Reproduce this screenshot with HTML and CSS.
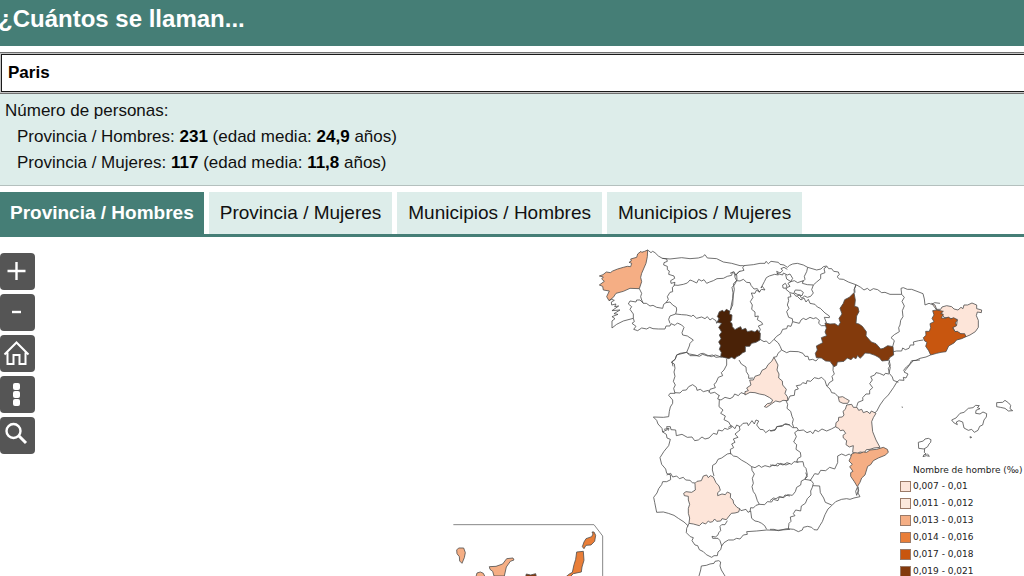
FILE: index.html
```html
<!DOCTYPE html>
<html lang="es">
<head>
<meta charset="utf-8">
<title>¿Cuántos se llaman...</title>
<link rel="stylesheet" href="styles.css">
</head>
<body>
<header class="header"><h1 class="title">¿Cuántos se llaman...</h1></header>
<input class="name-input" type="text" value="Paris" aria-label="Nombre">
<section class="summary">
  <p>Número de personas:</p>
  <p class="summary-item">Provincia / Hombres: <b>231</b> (edad media: <b>24,9</b> años)</p>
  <p class="summary-item">Provincia / Mujeres: <b>117</b> (edad media: <b>11,8</b> años)</p>
</section>
<nav class="tabs">
  <button class="tab tab-active" type="button">Provincia / Hombres</button>
  <button class="tab" type="button">Provincia / Mujeres</button>
  <button class="tab" type="button">Municipios / Hombres</button>
  <button class="tab" type="button">Municipios / Mujeres</button>
</nav>
<main class="map-panel">
  <div class="tools">
    <button class="tool" type="button" aria-label="Acercar"><svg viewBox="0 0 36 36"><path d="M7.500 17H25.500M16.500 8V26"/></svg></button>
    <button class="tool" type="button" aria-label="Alejar"><svg viewBox="0 0 36 36"><path stroke-width="2.400" d="M12 17H21"/></svg></button>
    <button class="tool" type="button" aria-label="Inicio"><svg viewBox="0 0 36 36"><path stroke-width="2" d="M4.500 18.500 16.500 6.500 28.500 18.500M7.500 16.500V28H13.500V19H19.500V28H25.500V16.500"/></svg></button>
    <button class="tool" type="button" aria-label="Opciones"><svg viewBox="0 0 36 36"><g fill="#fff" stroke="none"><rect x="13" y="6" width="7" height="7" rx="2"/><rect x="13" y="14" width="7" height="7" rx="2"/><rect x="13" y="22" width="7" height="7" rx="2"/></g></svg></button>
    <button class="tool" type="button" aria-label="Buscar"><svg viewBox="0 0 36 36"><circle cx="13.500" cy="13" r="7"/><path stroke-width="3" d="M18.500 17.500 26 25"/></svg></button>
  </div>
  <svg class="map" viewBox="440 237 584 339" role="img" aria-label="Mapa de España por provincias">
    <g transform="translate(590 240) scale(.33333)">
      <path class="c3" d="M173 30 164 34 155 37 153 34 143 42 140 52 122 57 124 63 117 67 125 70 122 80 112 79 100 82 83 87 68 93 61 98 49 96 39 104 28 108 40 111 35 117 43 124 28 135 38 139 40 150 58 153 50 170 57 182 70 172 78 160 100 154 120 145 148 146 155 125 152 112 155 100 168 70 172 50Z"/>
      <path d="M173 30 183 38 188 34 195 38 205 48 217 55 240 57 275 53 300 56 325 54 338 50 345 44 352 54 380 56 400 66 425 70 450 77"/>
      <path d="M148 146 155 160 152 170 155 180 160 190M57 182 65 178 73 181 64 186 65 195 78 192 74 200 86 198 66 212 90 210 72 221 84 223 66 230 75 236 66 243 66 264 80 253 100 243 130 235"/>
      <path d="M130 235 130 222 120 208 125 200 115 192 120 183 138 186 140 180 150 180 160 190 169 190 180 198 189 196 200 202 218 205 221 193 228 188"/>
      <path d="M217 55 230 57 232 64 222 68 221 75 232 79 232 89 238 93 236 103 252 108 254 115 242 122 243 130 255 127 252 138 247 142 248 155 240 157 232 170 235 178 228 188 240 186 248 195 259 202 260 210 257 222 240 228 236 238 240 250"/>
      <path d="M130 235 133 245 126 250 138 259 131 268 143 272 155 264 170 267 179 262 189 266 205 267 225 267 228 258 240 258 243 251 255 256 262 249 275 255 282 262 276 278 278 285 292 288 310 300 300 310 298 318 290 337"/>
      <path d="M257 222 275 224 290 225 305 229 309 225 320 235 335 231 345 236 352 230 360 240 367 235 378 242 380 250 385 240 388 227"/>
      <path d="M252 135 264 136 280 133 292 129 300 120 308 123 320 129 326 118 335 123 342 119 350 130 359 126 370 122 381 116 400 115 412 109 425 106 427 97 433 100 437 106 450 92M440 104 441 120 430 132 433 148 430 165 428 195 420 212"/>
      <path d="M260 345 290 337 300 347 322 347 332 341 340 340 355 347 364 350 376 345 385 348 395 352M260 345 256 357 246 365 249 379"/>
    </g>
    <g transform="translate(710 240) scale(.33333)">
      <path d="M90 77 100 77 130 74 150 70 165 70 168 64 175 71 183 64 205 67 210 73 222 75 232 82 239 76 248 72 262 70 280 75 293 82 320 90 333 87 340 80 350 78 356 86 365 86 371 94 385 96 388 104 381 110 388 117 400 118 415 126 440 135"/>
      <path d="M60 100 72 95 77 105 87 95 102 91 98 83 103 77M74 103 75 112 80 122 90 123 100 118 110 127 120 128 123 136 132 147 142 146 148 157 154 148 165 150 157 139 153 144 163 125 169 113 178 108 194 103 205 105 200 94 210 99 218 92 213 86 222 82 232 88M80 122 73 135 66 142 69 158 68 175 64 195 62 210"/>
      <path d="M150 155 139 151 135 160 124 159 129 172 121 185 127 195 125 208 135 216 135 230 145 228 142 239 155 247 158 253 145 258 151 268 148 276"/>
      <path d="M200 100 218 105 220 99 232 105 240 102 248 115 242 125 253 122 263 128 280 122 277 130 292 134 310 135 305 149 310 159 302 169 292 172 284 168 275 175 269 165 258 169 252 161 240 158 228 148 232 142 240 139 234 130 243 125 230 117 227 104M218 135 226 130 231 138 227 145 219 144ZM252 158 256 150 272 151 280 157 276 167 262 163Z"/>
      <path d="M293 82 290 95 283 109 285 118 278 125M350 80 342 86 345 98 332 103 332 116 320 126 310 135M438 135 434 145 435 158"/>
      <path d="M240 160 243 170 234 172 236 182 232 195 237 205 230 215 236 232 247 236 248 245 268 250 273 240 280 235 288 239 300 232 310 236 318 233 328 241 326 250 334 257 348 257M262 169 273 180 282 174 288 186 295 178 300 190 315 193 322 201 331 205 345 219 358 228 358 233 343 232 346 240 350 250"/>
      <path d="M248 245 243 259 233 257 230 266 218 268 212 281 200 289 192 298 205 309 211 320 215 330 230 338 240 334 265 335 279 340 285 349 294 349 297 360 308 358 318 363 325 355M192 298 185 305 178 312 169 303 162 305 150 298M215 330 204 340 200 350 190 352"/>
      <path class="c7" d="M28 215 38 211 42 216 49 208 60 214 58 222 66 225 65 240 60 246 66 250 67 260 75 269 85 263 92 260 96 269 107 265 112 275 125 272 135 276 142 269 151 280 150 300 138 307 125 310 119 319 106 319 106 335 98 338 90 346 80 350 74 357 65 352 56 356 45 353 32 350 34 337 28 328 32 317 26 306 33 296 28 285 35 276 26 262 35 250 22 247 28 236 22 230Z"/>
      <path class="c6" d="M432 158 418 172 404 179 400 190 390 205 396 222 387 235 391 248 385 258 375 251 360 252 345 249 349 265 345 276 350 287 334 293 338 308 319 318 322 330 316 340 319 353 334 354 347 363 360 364 372 380 380 376 382 366 402 364 412 354 423 359 430 352 438 356 443 346 450 355 457 349 465 339 478 340 495 346 508 353 516 363 535 361 540 352 551 345 549 320 533 317 520 325 512 327 498 311 484 306 468 288 469 275 457 259 447 252 438 250 440 228 447 215 444 202 434 199 436 180Z"/>
    </g>
    <g transform="translate(840 240) scale(.33333)">
      <path d="M50 135 62 142 72 150 82 145 90 152 100 146 113 149 125 158 135 157 150 163 168 163 185 163 183 145 190 143 202 148 215 148 231 154 249 161 253 177 255 195 267 190 275 193 284 188 300 190M48 135 42 149 43 158"/>
      <path d="M185 163 193 172 186 184 193 198 187 212 189 230 182 241 180 255 176 263 178 275 163 284 153 293 163 302 158 320M160 335 170 333 185 333 188 324 196 329 207 325 211 315 222 315 220 306 236 302 250 300M149 362 146 371 151 382 147 400M272 345 258 351 240 355 228 361 215 362 208 374 199 381 190 392"/>
      <path class="c1" d="M275 190 285 195 290 208 302 208 306 201 320 197 335 200 342 207 354 210 363 202 369 206 372 195 383 195 396 189 410 195 410 206 425 210 424 218 412 216 409 227 415 241 415 262 406 275 390 285 378 290 360 280 345 274 338 262 350 255 352 238 330 235 312 232 302 215 290 210Z"/>
      <path class="c5" d="M290 210 278 212 282 225 276 235 282 245 270 251 272 263 268 274 257 274 258 286 250 293 254 303 261 307 257 319 266 332 272 345 290 340 303 337 318 335 326 318 342 309 350 300 365 296 378 290 374 281 362 281 352 274 345 275 338 263 350 257 346 249 352 240 341 233 332 237 326 231 315 235 304 234 310 223 302 221 310 214Z"/>
    </g>
    <g transform="translate(640 350) scale(.33333)">
      <path d="M140 7 120 10 110 15 105 29 94 37 103 42 105 55 102 66 105 79 100 94 106 105 101 115 105 130 90 130 86 136 98 150 98 160 91 171 88 184 86 200 70 202 40 201 50 211 54 222 66 235 68 246 79 253 81 264 91 268 86 287 72 304 60 323 65 343 77 357 80 370 92 375"/>
      <path d="M105 128 120 129 128 121 139 120 146 110 158 104 169 112 171 121 181 118 190 125 205 121 211 130 224 127 238 137M260 27 260 45 252 60 244 68 248 77 235 82 228 98 222 103 226 113 210 118 207 127M297 30 304 42 318 51 319 65 326 76 326 85 340 84"/>
      <path d="M140 7 148 12 165 15 178 19 188 13 203 18 217 15 228 22 245 20M238 135 233 147 243 150 255 142 270 146 279 141 284 132 295 137 303 128 315 132"/>
      <path d="M238 150 237 170 249 180 242 190 256 198 252 209 266 216 275 232 263 238 254 235 247 243 235 240 231 253 220 250 207 264 195 267 186 261 175 270 164 272 156 261 142 262 126 253 109 257 107 240 93 239 91 230 80 230 82 239 67 246M72 238 87 235 85 242"/>
      <path d="M265 232 275 227 285 236 290 225 300 230 309 220 322 219 325 227 336 212 343 222 348 210 356 213 350 225 360 238 370 239 377 248 388 240 394 243 405 241 411 230 426 229 434 223 450 225M298 230 300 240 285 252 294 262 280 267 285 277 275 282 281 293 271 298 272 313"/>
      <path d="M272 310 262 312 245 324 234 328 228 340 218 346 217 360 222 378M272 310 280 318 291 320 304 330 320 339 335 350 345 353 357 346 364 352 375 347 390 351 398 345 414 348 421 340 438 345 450 340"/>
      <path class="c1" d="M402 22 395 34 384 44 378 55 366 61 360 74 345 79 340 90 329 90 333 105 320 114 325 122 315 125 315 135 330 127 345 128 358 132 374 135 389 143 398 150 393 159 382 161 373 170 380 172 394 162 407 153 420 156 429 151 444 152 442 140 435 130 439 118 428 105 427 93 416 84 417 72 411 60 414 45Z"/>
    </g>
    <g transform="translate(770 350) scale(.33333)">
      <path d="M450 30 430 32 421 42 414 51 402 66 414 72 408 84 400 82 402 91 388 90 380 97 371 112 355 135 342 148 330 165 320 184 312 190M357 30 361 46 355 55 358 70 367 81 370 91 385 97M357 72 346 70 342 76 328 70 318 68 314 75 302 80 307 90 299 101 308 113 299 121 299 132 288 132 278 143 279 151 264 157 260 170M190 45 189 61 193 72 186 79 189 91 178 98 172 109"/>
      <path d="M54 150 60 138 73 136 75 120 85 117 79 107 92 105 98 98 109 101 111 92 122 94 133 83 146 86 155 82 165 92 170 108 180 117 185 128 195 130 203 139 208 142"/>
      <path d="M48 152 53 163 51 175 62 184 66 199 70 208 67 220 71 232M0 243 17 238 20 230 38 226 47 221 57 224 68 233 81 233 86 242 100 240 111 248 121 244 129 251 135 240 145 245 156 237 170 243 184 237 197 230"/>
      <path d="M85 240 74 248 79 260 71 276 80 284 78 298 91 307 93 320 83 326 80 336 99 335 102 349 108 355 112 374 105 386M0 345 15 347 23 340 39 345 51 338 65 343 72 335 85 337M120 393 134 371 145 373 152 361 167 362 179 352 194 357 203 338 203 318 215 312 227 317 238 312 247 321"/>
      <path class="c1" d="M230 165 245 163 250 172 261 172 266 181 275 178 280 188 291 184 300 191 304 183 318 190 310 203 305 215 308 245 318 270 330 292 312 294 300 298 289 299 283 308 270 306 260 312 248 307 250 287 238 291 228 284 230 272 220 264 219 256 227 250 220 240 211 242 206 235 197 231 198 218 205 213 206 202 217 201 222 195 219 184 226 178ZM205 142 218 140 226 145 238 152 233 160 219 160 208 155Z"/>
    </g>
    <g transform="translate(640 440) scale(.33333)">
      <path d="M80 105 92 100 98 111 110 108 118 116 130 112 137 120 150 121 157 128 165 129M91 105 92 119 80 125 68 125 65 134 56 146 51 159 41 172 44 187 50 217 70 216 85 220 102 226 115 235 132 246 145 258M147 250 140 265 139 278 151 290 160 293 156 302 165 315 173 317 178 329 190 335 199 344 215 352 222 347 232 347 234 336 242 329 245 318 240 302 234 295 218 295 216 289 226 291 233 286 237 277 242 272 240 259 245 254 255 254 262 242"/>
      <path d="M245 318 252 308 265 300 280 300 290 295 300 297 310 285 322 283 320 275 350 273 380 270 410 271 450 268M298 205 303 212 318 208 324 217 332 213 335 235 345 243 355 245 365 250 374 257 380 268M335 80 336 91 343 102 337 115 340 130 336 140 340 155 346 163 352 182 358 193 348 196 340 204 332 203 330 215M358 193 374 194 382 185 395 186 400 178 414 182 418 171 430 172 435 165 450 168M177 408 182 390 184 378 199 376 210 372 222 370 225 364 236 362 242 366 240 378 244 390 255 408"/>
      <path class="c1" d="M165 130 171 124 184 122 190 108 200 105 205 113 211 107 220 111 228 128 237 138 241 151 233 158 233 167 246 162 256 164 262 156 272 161 271 173 279 180 281 190 291 202 299 206 296 216 285 219 274 220 265 231 259 239 246 236 242 243 230 244 224 237 218 245 210 247 205 243 197 252 187 248 178 257 160 252 147 250 149 234 145 220 145 205 149 193 145 180 145 169 133 167 131 160 138 155 155 157 166 150Z"/>
    </g>
    <g transform="translate(770 440) scale(.33333)">
      <path d="M107 98 112 110 104 118 94 123 92 135 80 142 76 155 67 166 53 164 40 173 28 170 18 176 10 174 0 182M104 118 123 121 130 130 127 142 122 153 123 165 112 176 106 190 94 198 92 213 77 210 70 221 75 227 61 231 63 244 57 250 55 267M129 137 149 138 151 158 161 174 166 187 185 195M0 268 12 268 25 272 50 266 71 268 85 275 97 270 100 262 113 259 125 262 132 269 142 270 150 256 157 245 165 224 174 207 185 197 197 185 215 178 230 176 240 178 252 174 270 170 264 159 265 140M262 142 266 151 260 166 257 154Z"/>
      <path class="c3" d="M245 42 255 38 270 40 280 36 290 37 300 30 320 28 340 22 352 28 355 37 345 46 325 54 310 62 302 74 293 79 285 105 275 114 270 127 262 140 253 125 242 109 242 98 249 94 239 80 247 73 237 63 242 52Z"/>
    </g>
    <g transform="translate(890 380) scale(.33333)">
      <path d="M185 120 198 114 210 100 222 97 235 85 249 83 257 76 268 77 262 83 270 86 258 91 257 100 270 102 279 96 290 101 289 111 282 120 278 135 269 139 264 151 253 157 245 148 235 151 222 144 218 126 207 122 199 126 202 134 191 128ZM320 68 338 67 345 61 356 69 362 76 360 86 368 92 355 93 345 85 331 82 320 80ZM85 187 100 183 105 177 115 175 123 179 122 187 117 192 113 200 102 207 86 205ZM104 206 103 217 109 223 102 224 99 230 109 227 118 229 112 221M240 170 245 172 241 174ZM35 81 39 82"/>
    </g>
    <g transform="translate(440 510) scale(.33333)">
      <path class="frame" d="M40 44H462L488 78V198"/>
      <path class="c3" d="M50 120 56 114 71 114 76 128 73 143 66 160 59 153 58 140 51 131ZM148 170 168 169 188 162 200 146 219 144 222 150 211 154 199 171 193 198H162L158 184 150 178ZM108 200 111 189 121 186 130 190 135 200Z"/>
      <path class="c4" d="M427 110 432 96 438 86 455 80 459 72 456 66 462 66 467 76 464 94 453 105 438 106 432 116ZM410 126 430 124 432 151 426 171 424 186 400 191 390 201H377L388 192 397 187 402 164 407 148Z"/>
      <path class="c6" d="M257 200 259 192 272 195 287 191 289 200Z"/>
    </g>
  </svg>
  <aside class="legend">
    <h2 class="legend-title">Nombre de hombre (‰)</h2>
    <ul class="legend-list">
      <li><i class="swatch s1"></i>0,007 - 0,01</li>
      <li><i class="swatch s2"></i>0,011 - 0,012</li>
      <li><i class="swatch s3"></i>0,013 - 0,013</li>
      <li><i class="swatch s4"></i>0,014 - 0,016</li>
      <li><i class="swatch s5"></i>0,017 - 0,018</li>
      <li><i class="swatch s6"></i>0,019 - 0,021</li>
    </ul>
  </aside>
</main>
</body>
</html>
```
FILE: styles.css
```css
* { box-sizing: border-box; }
body {
  margin: 0;
  background: #fff;
  color: #111;
  font-family: "Liberation Sans", Arial, sans-serif;
  overflow: hidden;
}
.header {
  background: #457e76;
  height: 46px;
  margin-bottom: 8px;
}
.title {
  margin: 0 0 0 -2px;
  color: #fff;
  font-size: 24px;
  line-height: 38px;
}
.name-input {
  display: block;
  width: calc(100% + 7px);
  height: 38px;
  margin: 0 0 2px 1px;
  padding: 0 6px;
  border: 1px solid #1a1a1a;
  box-shadow: 0 0 0 1px #c4c4c4, 0 0 0 2px #707070;
  background: #fff;
  color: #000;
  font: bold 17px "Liberation Sans", Arial, sans-serif;
}
.summary {
  padding: 4px 5px 9px;
  background: #ddedea;
  border-bottom: 1px solid #b4c0be;
  font-size: 17px;
  line-height: 26px;
}
.summary p { margin: 0; }
.summary .summary-item { padding-left: 12px; }
.summary b { color: #000; }
.tabs {
  display: flex;
  gap: 5px;
  padding-top: 6px;
  border-bottom: 3px solid #457e76;
}
.tab {
  height: 42px;
  padding: 0 11px;
  border: 0;
  background: #ddedea;
  color: #111;
  font: 19px "Liberation Sans", Arial, sans-serif;
}
.tab-active {
  padding: 0 10px;
  background: #457e76;
  color: #fff;
  font-weight: bold;
}
.map-panel {
  position: relative;
  display: flex;
  justify-content: space-between;
  align-items: flex-start;
}
.tools {
  display: grid;
  gap: 4px;
  padding-top: 16px;
}
.tool {
  width: 35px;
  height: 37px;
  padding: 0;
  border: 0;
  border-radius: 4px;
  background: #555;
}
.tool svg {
  display: block;
  width: 36px;
  height: 36px;
  fill: none;
  stroke: #fff;
  stroke-width: 2.4px;
}
.map {
  width: 584px;
  height: 339px;
}
.map path {
  fill: none;
  stroke: #4c4c4c;
  stroke-width: 2.4px;
  stroke-linejoin: round;
}
.map .frame { stroke: #888; stroke-width: 3px; }
.map .c1 { fill: #fde5d9; }
.map .c3 { fill: #f5ae84; }
.map .c4 { fill: #e97e38; }
.map .c5 { fill: #c8560f; }
.map .c6 { fill: #833a0c; }
.map .c7 { fill: #4a2207; }
.legend {
  position: absolute;
  top: 225px;
  right: 4px;
  width: 120px;
  color: #222;
  font: 9px/17px "DejaVu Sans", sans-serif;
}
.legend-title {
  margin: 0;
  padding-left: 13px;
  font-size: 9px;
  font-weight: normal;
  line-height: 16px;
  white-space: nowrap;
}
.legend-list {
  margin: 0;
  padding: 0;
  list-style: none;
}
.legend-list li {
  display: flex;
  align-items: center;
  gap: 2px;
}
.swatch {
  width: 11px;
  height: 11px;
  border: 1px solid #9a7a68;
}
.s1 { background: #fde5d9; }
.s2 { background: #fce9dd; }
.s3 { background: #f5ae84; }
.s4 { background: #e97e38; }
.s5 { background: #c8560f; }
.s6 { background: #833a0c; }
```
